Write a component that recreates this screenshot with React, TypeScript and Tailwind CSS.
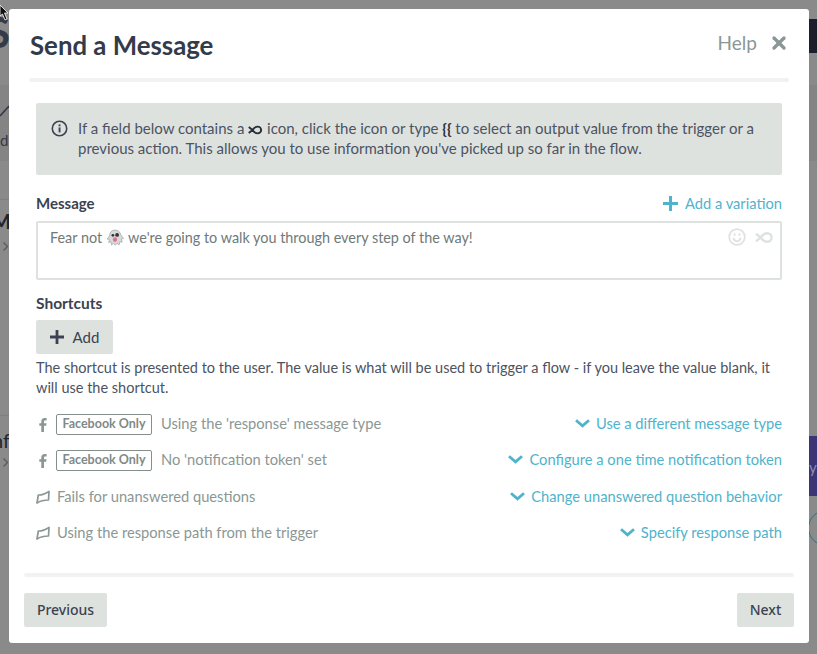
import React from "react";
import { X } from "lucide-react";

const FONT = "font-['Lato','Noto_Sans',sans-serif]";

function InfinityMark({ className = "" }: { className?: string }) {
  return (
    <svg className={className} viewBox="0 0 20 12" fill="none" stroke="currentColor" strokeWidth={2.6} aria-hidden="true">
      <path d="M1 2l5 4-5 4M6 6c2-3 4-4.500 7-4.500a4.500 4.500 0 010 9C10 10.500 8 9 6 6z" />
    </svg>
  );
}

function PlusMark({ className = "" }: { className?: string }) {
  return (
    <svg className={className} viewBox="0 0 15 15" fill="currentColor" aria-hidden="true">
      <path d="M6 0h3v6h6v3H9v6H6V9H0V6h6z" />
    </svg>
  );
}

function ChevronMark() {
  return (
    <svg className="h-[9px] w-[15px] shrink-0" viewBox="0 0 15 9" fill="none" stroke="currentColor" strokeWidth="2.800" aria-hidden="true">
      <path d="M1 1.300l6.500 5.500L14 1.300" />
    </svg>
  );
}

function InfoIcon() {
  return (
    <svg className="h-[17px] w-[17px] shrink-0 text-[#3b4251]" viewBox="0 0 17 17" fill="none" aria-hidden="true">
      <circle cx="8.500" cy="8.500" r="7.200" stroke="currentColor" strokeWidth="1.600" />
      <rect x="7.600" y="7.400" width="1.900" height="5" fill="currentColor" />
      <rect x="7.600" y="4.400" width="1.900" height="1.900" fill="currentColor" />
    </svg>
  );
}

function GhostEmoji() {
  return (
    <svg className="mx-[4px] inline-block h-[18px] w-[18px] align-[-4px]" viewBox="0 0 17 17" aria-hidden="true">
      <path d="M8.500 1C5 1 3.500 3.500 3.300 6.500L1 9.500l2.300.2-.8 3 2.200-.7.500 3.200 2-1.800 1.500 2 1.700-2 2 1.600.7-3 2.200.4-.8-2.900 2.200-.5-2.500-3.200C13.500 3.500 12 1 8.500 1z" fill="#d9d9d9" stroke="#9a9a9a" strokeWidth=".6" />
      <circle cx="6.500" cy="6" r="1.300" fill="#333" />
      <circle cx="10.500" cy="5.600" r="1.800" fill="#333" />
      <ellipse cx="8.500" cy="10" rx="2" ry="2.300" fill="#e0709a" />
    </svg>
  );
}

function FacebookIcon() {
  return (
    <svg className="h-[14px] w-[8px] shrink-0 text-[#8b9794]" viewBox="0 0 8 14" fill="currentColor" aria-hidden="true">
      <path d="M2.300 14V7.800H.3V5.300h2V3.500C2.300 1.200 3.600 0 5.600 0c.9 0 1.700.1 2 .1v2.300H6.300c-1.100 0-1.300.5-1.300 1.300v1.600h2.500l-.3 2.500H5V14z" />
    </svg>
  );
}

function FlagIcon() {
  return (
    <svg className="h-[14px] w-[14px] shrink-0 text-[#8b9794]" viewBox="0 0 14 14" fill="none" stroke="currentColor" strokeWidth="1.700" strokeLinejoin="round" aria-hidden="true">
      <path d="M1 13L2.300 5C6 5.200 9 4 13 1.500l-.5 8.500C9 10 5 10.500 1 13z" />
    </svg>
  );
}

function FacebookTag() {
  return (
    <span className="mt-[2px] mr-[9px] ml-[9px] flex h-[21px] w-[96px] shrink-0 items-center justify-center rounded-[2px] border border-[#85908d] text-[12.500px] font-bold text-[#7f8a88]">
      Facebook Only
    </span>
  );
}

const CHECKS = [
  { fb: true, text: "Using the 'response' message type", action: "Use a different message type", mt: "mt-[15px]" },
  { fb: true, text: "No 'notification token' set", action: "Configure a one time notification token", mt: "mt-[15px]" },
  { fb: false, text: "Fails for unanswered questions", action: "Change unanswered question behavior", mt: "mt-[16px]" },
  { fb: false, text: "Using the response path from the trigger", action: "Specify response path", mt: "mt-[15px]" },
];

export default function App() {
  return (
    <div className={`relative h-[654px] w-[817px] overflow-hidden bg-[#8a8a8a] ${FONT}`}>
      {/* dimmed page behind the modal */}
      <div className="absolute top-[85px] left-0 h-[76px] w-full bg-[#848484]" />
      <div className="absolute top-[199px] left-0 h-px w-[9px] bg-[#7f7f7f]" />
      <div className="absolute top-[415px] left-0 h-px w-[9px] bg-[#7f7f7f]" />
      <div className="absolute top-[19px] right-0 h-[34px] w-[8px] bg-[#1c1f2b]" />
      <div className="absolute top-[436px] right-0 h-[60px] w-[8px] bg-[#3b3477] pt-[24px] text-[15px] leading-none text-[#8f8bb0]">y</div>
      <div className="absolute top-[510px] left-[808px] h-[36px] w-[36px] rounded-full border border-[#2f6f80]" />
      <div className="absolute top-[11px] left-[-13px] text-[42px] leading-none font-bold text-[#343a46]">S</div>
      <div className="absolute top-[133px] left-0 text-[15px] leading-none text-[#343a46]">d</div>
      <div className="absolute top-[211px] left-[-8px] text-[20px] leading-none font-bold text-[#22252d]">Me</div>
      <div className="absolute top-[430px] left-[-8px] text-[20px] leading-none text-[#22252d]">nf</div>
      <svg className="absolute top-[100px] left-0 h-[20px] w-[9px] text-[#343a46]" viewBox="0 0 9 20" fill="none" stroke="currentColor" strokeWidth="1.600" aria-hidden="true">
        <path d="M0 16l9-10" />
      </svg>
      <svg className="absolute top-[242px] left-[3px] h-[9px] w-[5px] text-[#5c5c5c]" viewBox="0 0 5 9" fill="none" stroke="currentColor" strokeWidth="1.400" aria-hidden="true">
        <path d="M.5.500l4 4-4 4" />
      </svg>
      <svg className="absolute top-[458px] left-[3px] h-[9px] w-[5px] text-[#5c5c5c]" viewBox="0 0 5 9" fill="none" stroke="currentColor" strokeWidth="1.400" aria-hidden="true">
        <path d="M.5.500l4 4-4 4" />
      </svg>

      <div className="absolute top-[9px] left-[9px] flex h-[634px] w-[800px] flex-col rounded-[3px] bg-white pt-[17px] pr-[15px] pb-[16px] pl-[15px] text-[#3b4251]">
        <header className="flex h-[37px] items-center justify-between pr-[5px] pl-[6px]">
          <h1 className="mt-[2px] text-[25.800px] leading-none font-bold text-[#333b4a]">Send a Message</h1>
          <div className="flex items-center gap-[12px] pb-[3px] text-[#8b9794]">
            <span className="text-[19px]">Help</span>
            <X className="h-[20px] w-[20px]" strokeWidth={4} />
          </div>
        </header>
        <div className="mx-[5px] mt-[15px] h-[4px] rounded-full bg-[#f2f2f2]" />

        <div className="mx-[12px] mt-[21px] flex h-[72px] gap-[10px] rounded-[2px] bg-[#dee2df] pt-[15px] pl-[15px] text-[15px] leading-[20px] text-[#4c5362]">
          <div className="pt-[2px]"><InfoIcon /></div>
          <p className="w-[680px]">
            If a field below contains a <InfinityMark className="inline-block h-[10px] w-[15px] align-[-1px] text-[#2a2f3a]" /> icon, click the icon or type <b className="text-[#2a2f3a]">{"{{"}</b> to select an output value from the trigger or a previous action. This allows you to use information you've picked up so far in the flow.
          </p>
        </div>

        <div className="mx-[12px] mt-[19px] flex h-[20px] items-center justify-between pb-[2px]">
          <span className="text-[15px] font-bold text-[#3b4251]">Message</span>
          <span className="flex items-center gap-[7px] text-[14.700px] text-[#4fb3cc]">
            <PlusMark className="h-[15px] w-[15px]" />
            Add a variation
          </span>
        </div>
        <div className="relative mx-[12px] mt-[7px] h-[59px] rounded-[2px] border-2 border-[#dee2df] pt-[5px] pl-[12px] text-[14.400px] leading-[20px] text-[#6f7a78]">
          Fear not<GhostEmoji />we're going to walk you through every step of the way!
          <div className="absolute top-[5px] right-[6px] flex items-center gap-[9px] text-[#dfe3e0]">
            <svg className="h-[18px] w-[18px]" viewBox="0 0 18 18" fill="none" stroke="currentColor" strokeWidth="1.800" strokeLinecap="round" aria-hidden="true">
              <circle cx="9" cy="9" r="7.800" />
              <path d="M5.500 10.500c1 2 2.200 2.800 3.500 2.800s2.500-.8 3.500-2.800" />
              <path d="M6.500 6v1M11.500 6v1" />
            </svg>
            <InfinityMark className="h-[13px] w-[19px]" />
          </div>
        </div>

        <div className="mx-[12px] mt-[14px] pb-[1px] text-[15.500px] leading-[19px] font-bold text-[#3b4251]">Shortcuts</div>
        <div className="mx-[12px] mt-[6px] flex h-[34px] w-[77px] items-center justify-center gap-[9px] rounded-[2px] bg-[#dee2df] text-[15px] text-[#3b4251]">
          <PlusMark className="h-[14px] w-[14px]" />
          Add
        </div>
        <p className="mx-[12px] mt-[4px] text-[14.500px] leading-[20px] text-[#4c5362]">
          The shortcut is presented to the user. The value is what will be used to trigger a flow - if you leave the value blank, it will use the shortcut.
        </p>

        {CHECKS.map((row) => (
          <div key={row.text} className={`mx-[12px] flex h-[21px] items-center justify-between text-[14.700px] ${row.mt}`}>
            <div className="flex items-center text-[#8b9794]">
              {row.fb ? (
                <>
                  <span className="mt-[2px] ml-[3px]"><FacebookIcon /></span>
                  <FacebookTag />
                </>
              ) : (
                <span className="mr-[7px]"><FlagIcon /></span>
              )}
              <span>{row.text}</span>
            </div>
            <div className="flex items-center gap-[6px] text-[#4fb3cc]">
              <ChevronMark />
              <span>{row.action}</span>
            </div>
          </div>
        ))}

        <div className="mt-auto h-[4px] rounded-full bg-[#f2f2f2]" />
        <footer className="mt-[16px] flex justify-between font-['Noto_Sans',sans-serif]">
          <button className="h-[34px] w-[83px] rounded-[2px] bg-[#dee2df] pb-[2px] text-[14px] font-medium text-[#3b4251]">Previous</button>
          <button className="h-[34px] w-[57px] rounded-[2px] bg-[#dee2df] pb-[2px] text-[14px] font-medium text-[#3b4251]">Next</button>
        </footer>
      </div>

      {/* mouse cursor caught in the capture */}
      <svg className="absolute top-[5px] left-0 h-[16px] w-[9px]" viewBox="0 0 9 16" aria-hidden="true">
        <path d="M0 0l8 8H4.500L7 14l-2 1-2.500-6L0 11z" fill="#111" stroke="#fff" strokeWidth=".8" />
      </svg>
    </div>
  );
}
